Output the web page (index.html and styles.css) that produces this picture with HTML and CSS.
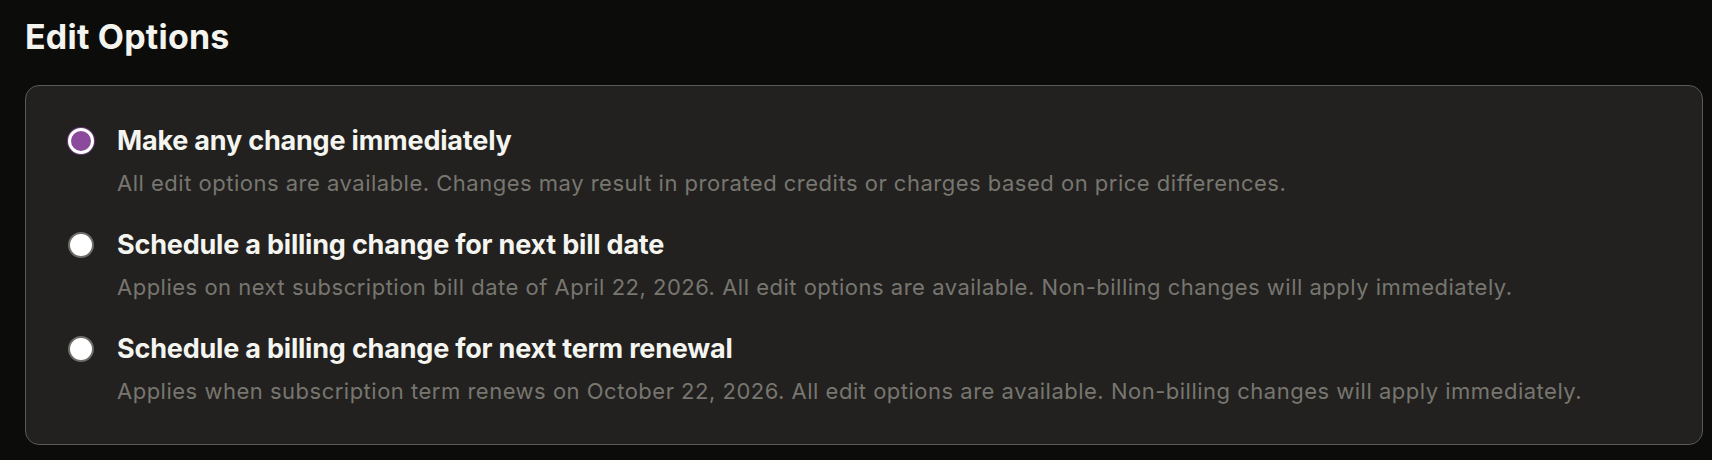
FILE: index.html
```html
<!DOCTYPE html>
<html lang="en">
<head>
<meta charset="utf-8">
<title>Edit Options</title>
<link rel="stylesheet" href="styles.css">
</head>
<body>
<main class="page">
  <h1 class="heading">Edit Options</h1>
  <section class="card">
    <label class="option">
      <span class="radio radio-checked"></span>
      <span class="text">
        <span class="title">Make any change immediately</span>
        <span class="desc">All edit options are available. Changes may result in prorated credits or charges based on price differences.</span>
      </span>
    </label>
    <label class="option">
      <span class="radio"></span>
      <span class="text">
        <span class="title">Schedule a billing change for next bill date</span>
        <span class="desc">Applies on next subscription bill date of April 22, 2026. All edit options are available. Non-billing changes will apply immediately.</span>
      </span>
    </label>
    <label class="option">
      <span class="radio"></span>
      <span class="text">
        <span class="title">Schedule a billing change for next term renewal</span>
        <span class="desc">Applies when subscription term renews on October 22, 2026. All edit options are available. Non-billing changes will apply immediately.</span>
      </span>
    </label>
  </section>
</main>
</body>
</html>
```

FILE: styles.css
```css
html, body {
  margin: 0;
  padding: 0;
  background: #0c0c0b;
}
body {
  font-family: "Inter", "Liberation Sans", sans-serif;
  color: #f5f5f0;
  width: 1712px;
  height: 460px;
  overflow: hidden;
}
.page {
  padding: 17px 9px 0 25px;
}
.heading {
  margin: 0 0 28px 0;
  font-size: 34px;
  line-height: 40px;
  font-weight: 700;
  color: #f4f4ef;
  letter-spacing: 0.2px;
}
.card {
  box-sizing: border-box;
  height: 360px;
  background: #222120;
  border: 1.5px solid #5a5953;
  border-radius: 14px;
  padding: 39px 40px 0 42px;
  display: flex;
  flex-direction: column;
  gap: 31px;
}
.option {
  display: flex;
  align-items: flex-start;
  gap: 23px;
}
.radio {
  flex: none;
  box-sizing: border-box;
  width: 26px;
  height: 26px;
  margin-top: 3px;
  border-radius: 50%;
  background: #ffffff;
  border: 2px solid #6e6d69;
}
.radio-checked {
  background: #8b4a9b;
  border: 3px solid #ffffff;
  box-shadow: 0 0 0 1px #6a3a78;
}
.text {
  display: flex;
  flex-direction: column;
  gap: 11px;
}
.title {
  font-size: 27px;
  line-height: 32px;
  font-weight: 700;
  color: #f5f5f0;
  letter-spacing: -0.2px;
}
.desc {
  font-size: 22px;
  line-height: 30px;
  font-weight: 400;
  color: #77766f;
  letter-spacing: 0.5px;
}
```
